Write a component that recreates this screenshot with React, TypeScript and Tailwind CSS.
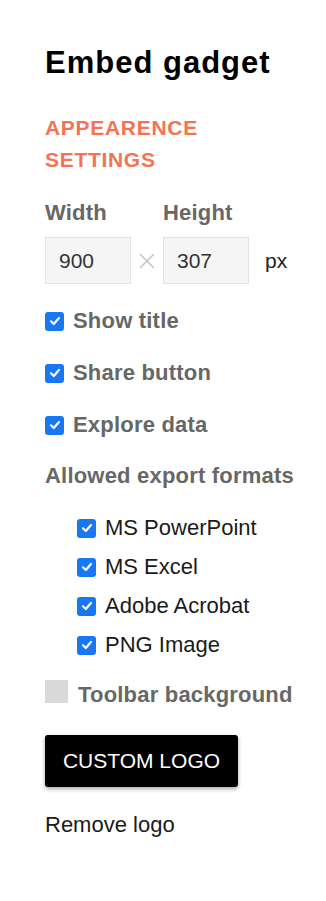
import React from 'react'

const font = { fontFamily: '"Liberation Sans", Arial, sans-serif' }

function Check({ on = true }: { on?: boolean }) {
  if (!on) return <span className="w-[23px] h-[23px] bg-[#d9d9d9] shrink-0" />
  return (
    <span className="w-[19px] h-[19px] rounded-[3px] bg-[#1877f2] flex items-center justify-center shrink-0">
      <svg width="12" height="12" viewBox="0 0 12 12" fill="none">
        <path d="M2 6.3 L4.8 9 L10 3" stroke="white" strokeWidth="2.2" strokeLinecap="round" strokeLinejoin="round" />
      </svg>
    </span>
  )
}

const MAIN = ['Show title', 'Share button', 'Explore data']
const FORMATS = ['MS PowerPoint', 'MS Excel', 'Adobe Acrobat', 'PNG Image']

export default function App() {
  return (
    <div className="min-h-[901px] w-[326px] bg-white pl-[45px] pt-[45px]" style={font}>
      <h1 className="text-[31px] leading-[36px] font-bold text-black tracking-[1px]">Embed gadget</h1>

      <h2 className="mt-[31px] text-[21px] leading-[32px] font-bold text-[#f47352] tracking-[0.7px]">
        APPEARENCE<br />SETTINGS
      </h2>

      <div className="mt-[25px] flex text-[22px] leading-[24px] font-bold text-[#676767] tracking-[0.2px]">
        <span className="w-[118px]">Width</span>
        <span>Height</span>
      </div>

      <div className="mt-[12px] flex items-center">
        <div className="w-[86px] h-[47px] bg-[#f5f5f5] border border-[#e3e3e3] pl-[13px] flex items-center text-[21px] text-[#333]">900</div>
        <span className="w-[32px] flex justify-center">
          <svg width="16" height="16" viewBox="0 0 16 16">
            <path d="M1 1 L15 15 M15 1 L1 15" stroke="#c4c4c4" strokeWidth="1.5" />
          </svg>
        </span>
        <div className="w-[86px] h-[47px] bg-[#f5f5f5] border border-[#e3e3e3] pl-[13px] flex items-center text-[21px] text-[#333]">307</div>
        <span className="ml-[16px] text-[21px] text-[#222]">px</span>
      </div>

      <div className="mt-[25px] flex flex-col gap-[28px]">
        {MAIN.map(l => (
          <label key={l} className="flex items-center gap-[9px] text-[22px] leading-[24px] font-bold text-[#676767] tracking-[0.2px]">
            <Check />
            {l}
          </label>
        ))}
      </div>

      <p className="mt-[27px] text-[22px] leading-[24px] font-bold text-[#676767] tracking-[0.2px]">Allowed export formats</p>

      <div className="mt-[28px] pl-[32px] flex flex-col gap-[15px]">
        {FORMATS.map(l => (
          <label key={l} className="flex items-center gap-[9px] text-[22px] leading-[24px] text-[#1a1a1a]">
            <Check />
            {l}
          </label>
        ))}
      </div>

      <label className="mt-[23px] flex items-start gap-[10px] text-[22px] leading-[24px] font-bold text-[#676767] tracking-[0.2px]">
        <Check on={false} />
        <span className="mt-[3px]">Toolbar background</span>
      </label>

      <button className="mt-[28px] w-[193px] h-[52px] bg-black text-white text-[21px] rounded-[3px] shadow-[0_2px_4px_rgba(0,0,0,0.35)] flex items-center justify-center">
        CUSTOM LOGO
      </button>

      <p className="mt-[26px] text-[22px] leading-[24px] text-[#1a1a1a]">Remove logo</p>
    </div>
  )
}
